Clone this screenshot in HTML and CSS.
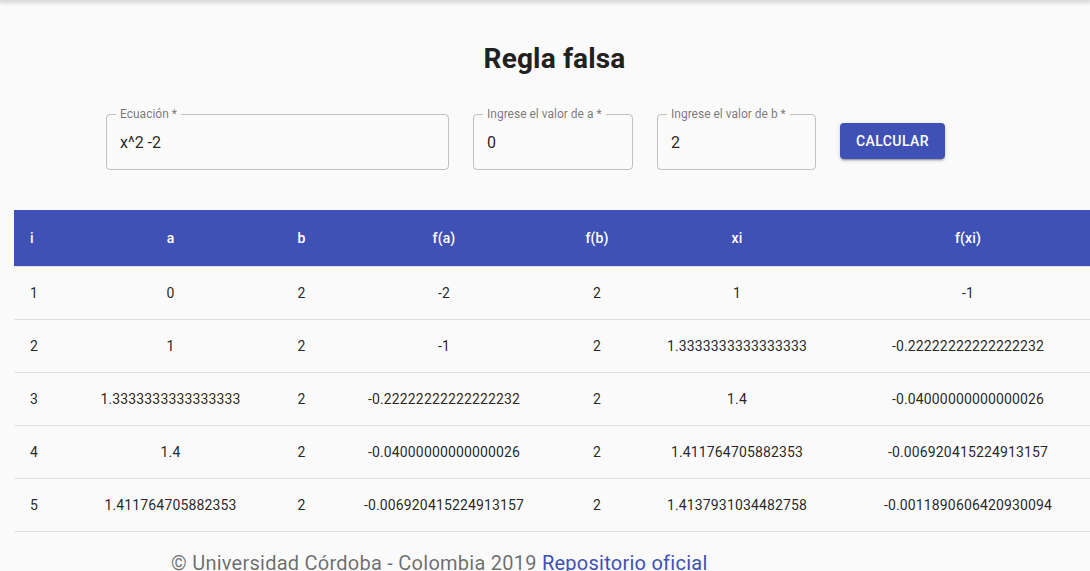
FILE: index.html
```html
<!DOCTYPE html>
<html lang="es">
<head>
<meta charset="utf-8">
<title>Regla falsa</title>
<link rel="stylesheet" href="styles.css">
</head>
<body>
<div class="topbar"></div>
<main class="page">
  <h1 class="title">Regla falsa</h1>
  <form class="form-row">
    <div class="field field-eq">
      <span class="field-label">Ecuación *</span>
      <input class="field-input" type="text" value="x^2 -2">
    </div>
    <div class="field field-a">
      <span class="field-label">Ingrese el valor de a *</span>
      <input class="field-input" type="text" value="0">
    </div>
    <div class="field field-b">
      <span class="field-label">Ingrese el valor de b *</span>
      <input class="field-input" type="text" value="2">
    </div>
    <button class="btn" type="button">Calcular</button>
  </form>
  <table class="results">
    <colgroup>
      <col class="c-i"><col class="c-a"><col class="c-b"><col class="c-fa"><col class="c-fb"><col class="c-xi"><col class="c-fxi">
    </colgroup>
    <thead>
      <tr><th class="left">i</th><th>a</th><th>b</th><th>f(a)</th><th>f(b)</th><th>xi</th><th>f(xi)</th></tr>
    </thead>
    <tbody>
      <tr><td class="left">1</td><td>0</td><td>2</td><td>-2</td><td>2</td><td>1</td><td>-1</td></tr>
      <tr><td class="left">2</td><td>1</td><td>2</td><td>-1</td><td>2</td><td>1.3333333333333333</td><td>-0.22222222222222232</td></tr>
      <tr><td class="left">3</td><td>1.3333333333333333</td><td>2</td><td>-0.22222222222222232</td><td>2</td><td>1.4</td><td>-0.04000000000000026</td></tr>
      <tr><td class="left">4</td><td>1.4</td><td>2</td><td>-0.04000000000000026</td><td>2</td><td>1.411764705882353</td><td>-0.006920415224913157</td></tr>
      <tr><td class="left">5</td><td>1.411764705882353</td><td>2</td><td>-0.006920415224913157</td><td>2</td><td>1.4137931034482758</td><td>-0.0011890606420930094</td></tr>
    </tbody>
  </table>
  <footer class="footer">© Universidad Córdoba - Colombia 2019 <a class="footer-link" href="#">Repositorio oficial</a></footer>
</main>
</body>
</html>
```
FILE: styles.css
```css
html, body {
  margin: 0;
  padding: 0;
  overflow: hidden;
  background: #fafafa;
}
body {
  font-family: Roboto, "Liberation Sans", Arial, sans-serif;
  color: rgba(0, 0, 0, 0.87);
}
.topbar {
  height: 0;
  box-shadow: 0 0 5px 2px rgba(0, 0, 0, 0.22);
}
.page {
  width: 1109px;
}
.title {
  margin: 42px 0 0;
  font-size: 28px;
  line-height: 34px;
  font-weight: 700;
  letter-spacing: 0.15px;
  text-align: center;
  color: #212121;
}
.form-row {
  display: flex;
  align-items: center;
  gap: 24px;
  margin: 38px 0 0;
  padding-left: 106px;
}
.field {
  position: relative;
  height: 56px;
  box-sizing: border-box;
  border: 1px solid rgba(0, 0, 0, 0.23);
  border-radius: 4px;
}
.field-eq { width: 343px; }
.field-a { width: 160px; }
.field-b { width: 159px; }
.field-label {
  position: absolute;
  left: 9px;
  top: -8px;
  padding: 0 4px;
  background: #fafafa;
  font-size: 12px;
  line-height: 14px;
  color: rgba(0, 0, 0, 0.54);
  white-space: nowrap;
}
.field-input {
  display: block;
  width: 100%;
  height: 54px;
  box-sizing: border-box;
  margin: 0;
  padding: 0 13px;
  border: 0;
  background: transparent;
  outline: none;
  font-family: Roboto, "Liberation Sans", Arial, sans-serif;
  font-size: 16px;
  color: rgba(0, 0, 0, 0.87);
}
.btn {
  width: 105px;
  height: 36px;
  margin: 0;
  padding: 0 16px;
  border: 0;
  border-radius: 4px;
  background: #3f51b5;
  color: #fff;
  font-family: Roboto, "Liberation Sans", Arial, sans-serif;
  font-size: 14px;
  font-weight: 500;
  letter-spacing: 0.4px;
  text-transform: uppercase;
  box-shadow: 0 3px 1px -2px rgba(0,0,0,0.2), 0 2px 2px 0 rgba(0,0,0,0.14), 0 1px 5px 0 rgba(0,0,0,0.12);
  position: relative;
  top: -1px;
}
.results {
  width: 1080px;
  margin: 40px 0 0 14px;
  table-layout: fixed;
  border-collapse: collapse;
  font-size: 14px;
  letter-spacing: 0.15px;
}
.c-i { width: 50px; }
.c-a { width: 213px; }
.c-b { width: 49px; }
.c-fa { width: 236px; }
.c-fb { width: 70px; }
.c-xi { width: 210px; }
.c-fxi { width: 252px; }
.results th,
.results td {
  padding: 16px;
  text-align: center;
  border-bottom: 1px solid rgb(224, 224, 224);
  white-space: nowrap;
}
.results th {
  background: #3f51b5;
  color: #fff;
  font-weight: 500;
  line-height: 24px;
}
.results td {
  line-height: 20px;
  font-weight: 400;
  color: rgba(0, 0, 0, 0.87);
}
.results .left {
  text-align: left;
}
.footer {
  margin-top: 19px;
  padding-left: 171px;
  font-size: 20px;
  line-height: 24px;
  letter-spacing: 0.25px;
  color: rgba(0, 0, 0, 0.58);
  white-space: nowrap;
}
.footer-link {
  color: #3f51b5;
  text-decoration: none;
}
```
